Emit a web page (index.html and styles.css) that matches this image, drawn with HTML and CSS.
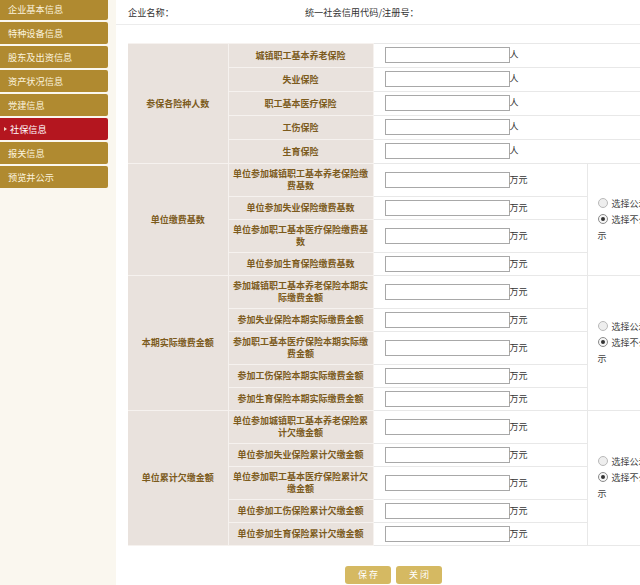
FILE: index.html
```html
<!DOCTYPE html>
<html lang="zh">
<head>
<meta charset="utf-8">
<title>社保信息</title>
<link rel="stylesheet" href="styles.css">
</head>
<body>
<div class="page">
  <aside class="sidebar">
    <ul class="nav">
      <li class="nav-item">企业基本信息</li>
      <li class="nav-item">特种设备信息</li>
      <li class="nav-item">股东及出资信息</li>
      <li class="nav-item">资产状况信息</li>
      <li class="nav-item">党建信息</li>
      <li class="nav-item active"><span class="caret"></span>社保信息</li>
      <li class="nav-item">报关信息</li>
      <li class="nav-item">预览并公示</li>
    </ul>
  </aside>
  <main class="main">
    <div class="info-bar">
      <span class="info-name">企业名称：</span>
      <span class="info-code">统一社会信用代码/注册号：</span>
    </div>
    <table class="form">
      <colgroup>
        <col class="c1"><col class="c2"><col class="c3"><col class="c4">
      </colgroup>
      <tbody>
        <tr class="tall">
          <th rowspan="5" class="sec">参保各险种人数</th>
          <th class="item">城镇职工基本养老保险</th>
          <td class="val" colspan="2"><input class="box" type="text"><span class="unit">人</span></td>
        </tr>
        <tr class="tall"><th class="item">失业保险</th><td class="val" colspan="2"><input class="box" type="text"><span class="unit">人</span></td></tr>
        <tr class="tall"><th class="item">职工基本医疗保险</th><td class="val" colspan="2"><input class="box" type="text"><span class="unit">人</span></td></tr>
        <tr class="tall"><th class="item">工伤保险</th><td class="val" colspan="2"><input class="box" type="text"><span class="unit">人</span></td></tr>
        <tr class="tall"><th class="item">生育保险</th><td class="val" colspan="2"><input class="box" type="text"><span class="unit">人</span></td></tr>

        <tr>
          <th rowspan="4" class="sec">单位缴费基数</th>
          <th class="item">单位参加城镇职工基本养老保险缴费基数</th>
          <td class="val"><input class="box" type="text"><span class="unit">万元</span></td>
          <td rowspan="4" class="pub">
            <label class="opt"><span class="radio"></span>选择公示</label>
            <label class="opt"><span class="radio on"></span>选择不公示</label>
          </td>
        </tr>
        <tr><th class="item">单位参加失业保险缴费基数</th><td class="val"><input class="box" type="text"><span class="unit">万元</span></td></tr>
        <tr><th class="item">单位参加职工基本医疗保险缴费基数</th><td class="val"><input class="box" type="text"><span class="unit">万元</span></td></tr>
        <tr><th class="item">单位参加生育保险缴费基数</th><td class="val"><input class="box" type="text"><span class="unit">万元</span></td></tr>

        <tr>
          <th rowspan="5" class="sec">本期实际缴费金额</th>
          <th class="item">参加城镇职工基本养老保险本期实际缴费金额</th>
          <td class="val"><input class="box" type="text"><span class="unit">万元</span></td>
          <td rowspan="5" class="pub">
            <label class="opt"><span class="radio"></span>选择公示</label>
            <label class="opt"><span class="radio on"></span>选择不公示</label>
          </td>
        </tr>
        <tr><th class="item">参加失业保险本期实际缴费金额</th><td class="val"><input class="box" type="text"><span class="unit">万元</span></td></tr>
        <tr><th class="item">参加职工基本医疗保险本期实际缴费金额</th><td class="val"><input class="box" type="text"><span class="unit">万元</span></td></tr>
        <tr><th class="item">参加工伤保险本期实际缴费金额</th><td class="val"><input class="box" type="text"><span class="unit">万元</span></td></tr>
        <tr><th class="item">参加生育保险本期实际缴费金额</th><td class="val"><input class="box" type="text"><span class="unit">万元</span></td></tr>

        <tr>
          <th rowspan="5" class="sec">单位累计欠缴金额</th>
          <th class="item">单位参加城镇职工基本养老保险累计欠缴金额</th>
          <td class="val"><input class="box" type="text"><span class="unit">万元</span></td>
          <td rowspan="5" class="pub">
            <label class="opt"><span class="radio"></span>选择公示</label>
            <label class="opt"><span class="radio on"></span>选择不公示</label>
          </td>
        </tr>
        <tr><th class="item">单位参加失业保险累计欠缴金额</th><td class="val"><input class="box" type="text"><span class="unit">万元</span></td></tr>
        <tr><th class="item">单位参加职工基本医疗保险累计欠缴金额</th><td class="val"><input class="box" type="text"><span class="unit">万元</span></td></tr>
        <tr><th class="item">单位参加工伤保险累计欠缴金额</th><td class="val"><input class="box" type="text"><span class="unit">万元</span></td></tr>
        <tr><th class="item">单位参加生育保险累计欠缴金额</th><td class="val"><input class="box" type="text"><span class="unit">万元</span></td></tr>
      </tbody>
    </table>
    <div class="actions">
      <button class="btn" type="button">保 存</button>
      <button class="btn" type="button">关 闭</button>
    </div>
  </main>
</div>
</body>
</html>
```
FILE: styles.css
```css
html, body {
  margin: 0;
  padding: 0;
  overflow: hidden;
  background: #ffffff;
}

body {
  font-family: "Noto Sans CJK SC", "Noto Sans", sans-serif;
  font-size: 9px;
  color: #333333;
}

.page {
  display: flex;
  width: 640px;
  height: 585px;
  overflow: hidden;
}

.sidebar {
  flex: 0 0 116px;
  background: #faf7ef;
  box-shadow: 1px 0 2px rgba(0, 0, 0, 0.04);
}

.nav {
  list-style: none;
  margin: -2px 0 0 0;
  padding: 0;
}

.nav-item {
  display: flex;
  align-items: center;
  width: 100px;
  height: 22px;
  margin-bottom: 2px;
  padding-left: 8px;
  background: #b08a30;
  color: #fbf3de;
  font-size: 9.2px;
  line-height: 22px;
  border-radius: 0 2px 2px 0;
}

.nav-item.active {
  background: #b4161f;
  padding-left: 4px;
  width: 104px;
  color: #ffffff;
}

.caret {
  display: inline-block;
  width: 0;
  height: 0;
  border-top: 2.5px solid transparent;
  border-bottom: 2.5px solid transparent;
  border-left: 3px solid #f3d9c8;
  margin-right: 3px;
}

.main {
  flex: 1 1 auto;
  min-width: 0;
  background: #ffffff;
}

.info-bar {
  display: flex;
  align-items: center;
  height: 24px;
  padding-left: 12px;
  border-bottom: 1px solid #ececec;
  color: #333333;
  font-size: 9.2px;
}

.info-code {
  margin-left: 131px;
}

.form {
  margin: 18px 0 0 12px;
  width: 531px;
  table-layout: fixed;
  border-collapse: collapse;
}

.c1 { width: 100px; }
.c2 { width: 145px; }
.c3 { width: 214px; }
.c4 { width: 72px; }

.form th {
  background: #e9e2dd;
  color: #7c5b1c;
  font-weight: bold;
  font-size: 9px;
  line-height: 12px;
  text-align: center;
  padding: 4px 3px;
  border: 1px solid #f6f2ef;
}

.form th.sec {
  border-left: 0;
}

.form td {
  border: 1px solid #e8e8e8;
  padding: 3px 0 3px 11px;
  line-height: 12px;
}

.form tr.tall td {
  padding-top: 3px;
  padding-bottom: 4px;
}

.form td.val {
  border-left: 1px solid #e6dfda;
  white-space: nowrap;
}

.box {
  display: inline-block;
  vertical-align: middle;
  box-sizing: border-box;
  width: 125px;
  height: 16px;
  margin: 0;
  padding: 0 2px;
  border: 1px solid #a8a8a8;
  background: #ffffff;
  font-size: 9px;
}

.unit {
  vertical-align: middle;
  color: #333333;
  font-size: 9px;
}

.form td.pub {
  padding: 0 4px 0 10px;
  vertical-align: middle;
  line-height: 16px;
  color: #444444;
}

.opt {
  display: block;
}

.radio {
  display: inline-block;
  vertical-align: -1px;
  box-sizing: border-box;
  width: 10px;
  height: 10px;
  margin-right: 4px;
  border: 1px solid #b9b9b9;
  border-radius: 50%;
  background: #eeeeee;
  position: relative;
}

.radio.on {
  border-color: #8a8a8a;
  background: #f6f6f6;
}

.radio.on::after {
  content: "";
  position: absolute;
  left: 2px;
  top: 2px;
  width: 4px;
  height: 4px;
  border-radius: 50%;
  background: #333333;
}

.actions {
  width: 531px;
  margin: 20px 0 0 12px;
  display: flex;
  justify-content: center;
  gap: 5px;
}

.btn {
  width: 46px;
  height: 18px;
  padding: 0;
  border: 0;
  border-radius: 3px;
  background: #d5b962;
  color: #ffffff;
  font-family: "Noto Sans CJK SC", sans-serif;
  font-size: 9px;
  line-height: 18px;
}
```
